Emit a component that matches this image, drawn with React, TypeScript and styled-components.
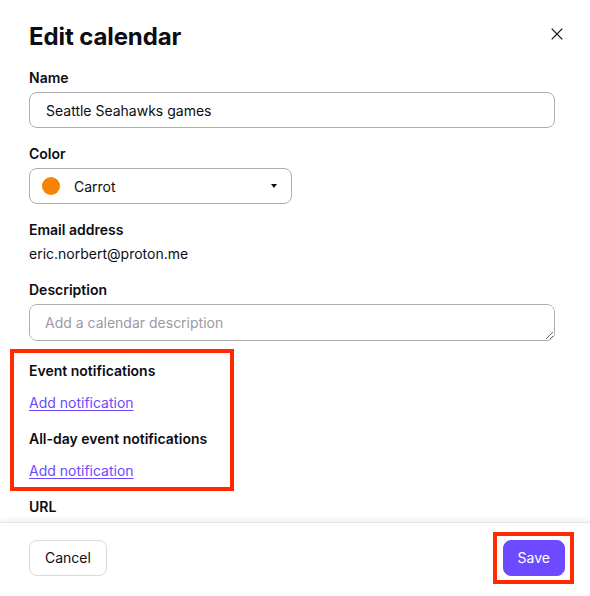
import React from "react";
import styled, { createGlobalStyle } from "styled-components";

const Global = createGlobalStyle`
  html, body { margin: 0; padding: 0; background: #fff; }
  body { font-family: Inter, "Noto Sans", sans-serif; color: #0c0c14; }
  * { box-sizing: border-box; }
`;

const Modal = styled.div`
  width: 590px;
  height: 596px;
  display: flex;
  flex-direction: column;
  background: #fff;
`;

const Header = styled.div`
  display: flex;
  align-items: center;
  justify-content: space-between;
  padding: 21px 25px 0 29px;
  height: 53px;
`;

const Title = styled.h1`
  margin: 0;
  font-size: 24px;
  line-height: 32px;
  font-weight: 700;
  color: #0c0c14;
  letter-spacing: -0.1px;
`;

const CloseButton = styled.button`
  border: none;
  background: none;
  padding: 0;
  width: 16px;
  height: 16px;
  display: flex;
  align-items: center;
  justify-content: center;
  cursor: pointer;
  margin-top: -6px;
`;

const Content = styled.div`
  flex: 1;
  overflow: hidden;
  padding: 15px 35px 0 29px;
  display: flex;
  flex-direction: column;
`;

const Field = styled.div<{ $gap?: number; $mb?: number }>`
  display: flex;
  flex-direction: column;
  gap: ${(p) => p.$gap ?? 4}px;
  margin-bottom: ${(p) => p.$mb ?? 16}px;
`;

const Label = styled.div`
  font-size: 14px;
  line-height: 20px;
  font-weight: 600;
  color: #0c0c14;
`;

const Value = styled.div`
  font-size: 14px;
  line-height: 20px;
  color: #0c0c14;
`;

const TextInput = styled.input`
  width: 100%;
  height: 36px;
  border: 1px solid #adabb3;
  border-radius: 8px;
  padding: 0 16px;
  font-family: inherit;
  font-size: 14px;
  color: #0c0c14;
  background: #fff;
  outline: none;
  flex: none;
`;

const TextArea = styled.textarea`
  width: 100%;
  height: 37px;
  border: 1px solid #adabb3;
  border-radius: 8px;
  padding: 8px 15px;
  font-family: inherit;
  font-size: 14px;
  line-height: 20px;
  color: #0c0c14;
  background: #fff;
  outline: none;
  resize: vertical;
  display: block;
  &::placeholder { color: #9c9aa3; }
`;

const Select = styled.button`
  width: 263px;
  height: 36px;
  border: 1px solid #adabb3;
  border-radius: 8px;
  background: #fff;
  display: flex;
  align-items: center;
  padding: 0 14px 0 12px;
  font-family: inherit;
  font-size: 14px;
  color: #0c0c14;
  cursor: pointer;
`;

const Dot = styled.span<{ $color: string }>`
  width: 18px;
  height: 18px;
  border-radius: 50%;
  background: ${(p) => p.$color};
  flex: none;
`;

const SelectText = styled.span`
  flex: 1;
  text-align: left;
  margin-left: 14px;
`;

const Caret = styled.span`
  width: 0;
  height: 0;
  border-left: 3.5px solid transparent;
  border-right: 3.5px solid transparent;
  border-top: 4px solid #0c0c14;
`;

const Highlight = styled.div`
  margin: -12px 0 6px -19px;
  width: 224px;
  border: 4px solid #ff2a00;
  padding: 8px 15px 6px;
  display: flex;
  flex-direction: column;
`;

const LinkButton = styled.a`
  font-size: 14px;
  line-height: 20px;
  color: #6d4aff;
  text-decoration: underline;
  text-underline-offset: 2px;
  cursor: pointer;
`;

const Footer = styled.div`
  height: 74px;
  flex: none;
  border-top: 1px solid #e5e5e5;
  box-shadow: 0 -3px 5px rgba(0, 0, 0, 0.05);
  position: relative;
  display: flex;
  align-items: center;
  justify-content: space-between;
  padding: 0 16px 4px 29px;
  background: #fff;
`;

const Button = styled.button<{ $primary?: boolean }>`
  height: 36px;
  border-radius: 8px;
  padding: 0 ${(p) => (p.$primary ? 14 : 15)}px;
  font-family: inherit;
  font-size: 14px;
  cursor: pointer;
  border: 1px solid ${(p) => (p.$primary ? "#6d4aff" : "#d9d9de")};
  background: ${(p) => (p.$primary ? "#6d4aff" : "#fff")};
  color: ${(p) => (p.$primary ? "#fff" : "#0c0c14")};
`;

const SaveHighlight = styled.div`
  border: 4px solid #ff2a00;
  padding: 4px 5px 4px 6px;
  display: flex;
`;

export default function App() {
  return (
    <>
      <Global />
      <Modal>
        <Header>
          <Title>Edit calendar</Title>
          <CloseButton aria-label="Close">
            <svg width="12" height="12" viewBox="0 0 12 12">
              <path d="M0.7 0.7 L11.3 11.3 M11.3 0.7 L0.7 11.3" stroke="#0c0c14" strokeWidth="1.2" fill="none" />
            </svg>
          </CloseButton>
        </Header>
        <Content>
          <Field>
            <Label>Name</Label>
            <TextInput defaultValue="Seattle Seahawks games" />
          </Field>
          <Field>
            <Label>Color</Label>
            <Select>
              <Dot $color="#f78400" />
              <SelectText>Carrot</SelectText>
              <Caret />
            </Select>
          </Field>
          <Field>
            <Label>Email address</Label>
            <Value>eric.norbert@proton.me</Value>
          </Field>
          <Field $mb={20}>
            <Label>Description</Label>
            <TextArea placeholder="Add a calendar description" />
          </Field>
          <Highlight>
            <Field $gap={12}>
              <Label>Event notifications</Label>
              <LinkButton>Add notification</LinkButton>
            </Field>
            <Field $gap={12} $mb={0}>
              <Label>All-day event notifications</Label>
              <LinkButton>Add notification</LinkButton>
            </Field>
          </Highlight>
          <Field $gap={8}>
            <Label>URL</Label>
            <TextInput readOnly defaultValue="" />
          </Field>
        </Content>
        <Footer>
          <Button>Cancel</Button>
          <SaveHighlight>
            <Button $primary>Save</Button>
          </SaveHighlight>
        </Footer>
      </Modal>
    </>
  );
}
